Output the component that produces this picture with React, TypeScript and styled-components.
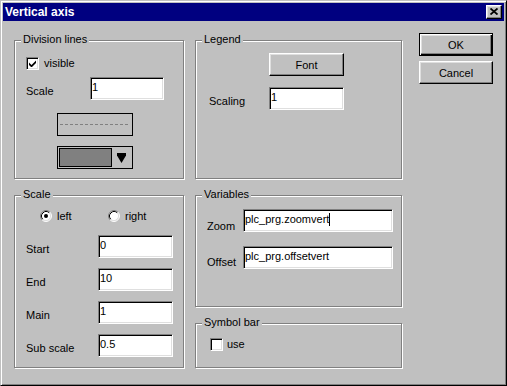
import React from 'react';
import styled, { createGlobalStyle } from 'styled-components';

const GlobalStyle = createGlobalStyle`
  html, body {
    margin: 0;
    padding: 0;
    background: #c0c0c0;
  }
  body {
    font-family: "Liberation Sans", Arial, sans-serif;
    font-size: 11px;
    color: #000;
  }
`;

const Window = styled.div`
  box-sizing: border-box;
  width: 507px;
  height: 386px;
  display: flex;
  flex-direction: column;
  padding: 2px;
  background: #c0c0c0;
  border: 1px solid;
  border-color: #c0c0c0 #000 #000 #c0c0c0;
  box-shadow: inset 1px 1px 0 #fff, inset -1px -1px 0 #808080;
`;

const TitleBar = styled.div`
  height: 18px;
  flex: none;
  display: flex;
  align-items: center;
  justify-content: space-between;
  padding: 0 2px;
  background: #000080;
  color: #fff;
  font-size: 12px;
  font-weight: bold;
  line-height: 14px;
`;

const CloseButton = styled.div`
  box-sizing: border-box;
  width: 16px;
  height: 14px;
  display: flex;
  align-items: center;
  justify-content: center;
  padding: 0 1px 1px 0;
  background: #c0c0c0;
  border: 1px solid;
  border-color: #fff #000 #000 #fff;
  box-shadow: inset -1px -1px 0 #808080, inset 1px 1px 0 #dfdfdf;
`;

const Body = styled.div`
  flex: 1;
  display: flex;
  align-items: flex-start;
  padding: 12px 0 0 11px;
`;

const Column = styled.div<{ $w: number; $ml?: number }>`
  width: ${(p) => p.$w}px;
  margin-left: ${(p) => p.$ml ?? 0}px;
  display: flex;
  flex-direction: column;
  gap: 16px;
  padding-top: 7px;
`;

const ButtonColumn = styled.div`
  margin-left: 17px;
  display: flex;
  flex-direction: column;
  gap: 5px;
`;

const GroupBox = styled.div<{ $h: number }>`
  position: relative;
  box-sizing: border-box;
  height: ${(p) => p.$h}px;
  border: 1px solid #808080;
  box-shadow: inset 1px 1px 0 #fff, 1px 1px 0 #fff;
`;

const Caption = styled.span`
  position: absolute;
  top: -8px;
  left: 6px;
  padding: 0 2px;
  line-height: 13px;
  background: #c0c0c0;
  white-space: nowrap;
`;

const GroupBody = styled.div<{ $pad: string }>`
  display: flex;
  flex-direction: column;
  align-items: flex-start;
  padding: ${(p) => p.$pad};
`;

const Row = styled.div<{ $mt?: number; $ml?: number }>`
  display: flex;
  align-items: flex-start;
  margin-top: ${(p) => p.$mt ?? 0}px;
  margin-left: ${(p) => p.$ml ?? 0}px;
`;

const Label = styled.span<{ $w: number; $top?: number }>`
  flex: none;
  width: ${(p) => p.$w}px;
  margin-top: ${(p) => p.$top ?? 8}px;
  line-height: 13px;
  white-space: nowrap;
`;

const Edit = styled.div<{ $w: number }>`
  box-sizing: border-box;
  flex: none;
  width: ${(p) => p.$w}px;
  height: 23px;
  padding: 3px 0 0 1px;
  background: #fff;
  border: 1px solid;
  border-color: #808080 #fff #fff #808080;
  box-shadow: inset 1px 1px 0 #000, inset -1px -1px 0 #dfdfdf;
  line-height: 13px;
  white-space: nowrap;
  overflow: hidden;
`;

const Caret = styled.span`
  display: inline-block;
  width: 1px;
  height: 13px;
  vertical-align: top;
  background: #000;
`;

const CheckRow = styled.label<{ $gap: number }>`
  display: flex;
  align-items: center;
  gap: ${(p) => p.$gap}px;
  height: 13px;
  line-height: 13px;
`;

const CheckBox = styled.span`
  box-sizing: border-box;
  flex: none;
  width: 13px;
  height: 13px;
  display: flex;
  align-items: center;
  justify-content: center;
  background: #fff;
  border: 1px solid;
  border-color: #808080 #fff #fff #808080;
  box-shadow: inset 1px 1px 0 #000, inset -1px -1px 0 #dfdfdf;
`;

const RadioRow = styled.div`
  display: flex;
  margin-left: 14px;
`;

const RadioOption = styled.label<{ $w?: number }>`
  display: flex;
  align-items: center;
  gap: 5px;
  height: 12px;
  line-height: 13px;
  width: ${(p) => (p.$w ? `${p.$w}px` : 'auto')};
`;

const PushButton = styled.button<{ $w: number; $default?: boolean }>`
  box-sizing: border-box;
  width: ${(p) => p.$w}px;
  height: 23px;
  padding: 0;
  font: inherit;
  color: #000;
  background: #c0c0c0;
  border: 1px solid;
  border-color: ${(p) => (p.$default ? '#000' : '#fff #000 #000 #fff')};
  box-shadow: ${(p) =>
    p.$default
      ? 'inset 1px 1px 0 #fff, inset -1px -1px 0 #000, inset -2px -2px 0 #808080, inset 2px 2px 0 #dfdfdf'
      : 'inset -1px -1px 0 #808080, inset 1px 1px 0 #dfdfdf'};
`;

const LineStyleBox = styled.div`
  box-sizing: border-box;
  width: 76px;
  height: 23px;
  margin: 13px 0 0 31px;
  display: flex;
  align-items: center;
  padding: 0 2px;
  border: 1px solid #000;
`;

const DashLine = styled.div`
  flex: 1;
  height: 1px;
  background: repeating-linear-gradient(to right, #808080 0 3px, transparent 3px 5px);
`;

const ColorCombo = styled.div`
  box-sizing: border-box;
  width: 76px;
  height: 23px;
  margin: 10px 0 0 31px;
  display: flex;
  padding: 1px;
  border: 1px solid #000;
`;

const Swatch = styled.div<{ $color: string }>`
  box-sizing: border-box;
  width: 53px;
  background: ${(p) => p.$color};
  border: 1px solid #000;
`;

const ComboArrow = styled.div`
  flex: 1;
  display: flex;
  align-items: center;
  justify-content: center;
`;

const Check = () => (
  <svg width="7" height="7" viewBox="0 0 7 7">
    <path d="M0 2.5L2.5 5L7 0.5V3L2.5 7.5L0 5Z" fill="#000" />
  </svg>
);

const Radio = ({ checked }: { checked?: boolean }) => (
  <svg width="12" height="12" viewBox="0 0 12 12" style={{ flex: 'none' }}>
    <circle cx="6" cy="6" r="5" fill="#fff" />
    <path d="M2.11 9.89A5.5 5.5 0 0 1 9.89 2.11" stroke="#808080" fill="none" />
    <path d="M9.89 2.11A5.5 5.5 0 0 1 2.11 9.89" stroke="#fff" fill="none" />
    <path d="M2.82 9.18A4.5 4.5 0 0 1 9.18 2.82" stroke="#000" fill="none" />
    <path d="M9.18 2.82A4.5 4.5 0 0 1 2.82 9.18" stroke="#dfdfdf" fill="none" />
    {checked && <circle cx="6" cy="6" r="2" fill="#000" />}
  </svg>
);

const Field = ({
  label,
  labelWidth,
  width,
  top,
  mt,
  children,
}: {
  label: string;
  labelWidth: number;
  width: number;
  top?: number;
  mt?: number;
  children: React.ReactNode;
}) => (
  <Row $mt={mt}>
    <Label $w={labelWidth} $top={top}>{label}</Label>
    <Edit $w={width}>{children}</Edit>
  </Row>
);

export default function App() {
  return (
    <>
      <GlobalStyle />
      <Window>
        <TitleBar>
          <span>Vertical axis</span>
          <CloseButton>
            <svg width="8" height="7" viewBox="0 0 8 7">
              <path d="M0.5 0.5L7.5 6.5M7.5 0.5L0.5 6.5" stroke="#000" strokeWidth="1.8" />
            </svg>
          </CloseButton>
        </TitleBar>
        <Body>
          <Column $w={170}>
            <GroupBox $h={139}>
              <Caption>Division lines</Caption>
              <GroupBody $pad="16px 0 0 11px">
                <CheckRow $gap={5}>
                  <CheckBox>
                    <Check />
                  </CheckBox>
                  visible
                </CheckRow>
                <Field label="Scale" labelWidth={64} width={74} mt={7}>
                  1
                </Field>
                <LineStyleBox>
                  <DashLine />
                </LineStyleBox>
                <ColorCombo>
                  <Swatch $color="#808080" />
                  <ComboArrow>
                    <svg width="9" height="10" viewBox="0 0 9 10">
                      <path d="M0 0H9V2.5L4.5 10L0 2.5Z" fill="#000" />
                    </svg>
                  </ComboArrow>
                </ColorCombo>
              </GroupBody>
            </GroupBox>
            <GroupBox $h={173}>
              <Caption>Scale</Caption>
              <GroupBody $pad="14px 0 0 11px">
                <RadioRow>
                  <RadioOption $w={68}>
                    <Radio checked />
                    left
                  </RadioOption>
                  <RadioOption>
                    <Radio />
                    right
                  </RadioOption>
                </RadioRow>
                <Field label="Start" labelWidth={72} width={75} mt={13}>
                  0
                </Field>
                <Field label="End" labelWidth={72} width={75} mt={10}>
                  10
                </Field>
                <Field label="Main" labelWidth={72} width={75} mt={10}>
                  1
                </Field>
                <Field label="Sub scale" labelWidth={72} width={75} mt={10}>
                  0.5
                </Field>
              </GroupBody>
            </GroupBox>
          </Column>

          <Column $w={207} $ml={11}>
            <GroupBox $h={139}>
              <Caption>Legend</Caption>
              <GroupBody $pad="12px 0 0 13px">
                <Row $ml={60}>
                  <PushButton $w={75}>Font</PushButton>
                </Row>
                <Field label="Scaling" labelWidth={60} width={75} mt={11}>
                  1
                </Field>
              </GroupBody>
            </GroupBox>
            <GroupBox $h={112}>
              <Caption>Variables</Caption>
              <GroupBody $pad="13px 0 0 11px">
                <Field label="Zoom" labelWidth={36} width={150} top={11}>
                  plc_prg.zoomvert
                  <Caret />
                </Field>
                <Field label="Offset" labelWidth={36} width={150} top={10} mt={13}>
                  plc_prg.offsetvert
                </Field>
              </GroupBody>
            </GroupBox>
            <GroupBox $h={45}>
              <Caption>Symbol bar</Caption>
              <GroupBody $pad="14px 0 0 14px">
                <CheckRow $gap={4}>
                  <CheckBox />
                  use
                </CheckRow>
              </GroupBody>
            </GroupBox>
          </Column>

          <ButtonColumn>
            <PushButton $w={74} $default>
              OK
            </PushButton>
            <PushButton $w={74}>Cancel</PushButton>
          </ButtonColumn>
        </Body>
      </Window>
    </>
  );
}
